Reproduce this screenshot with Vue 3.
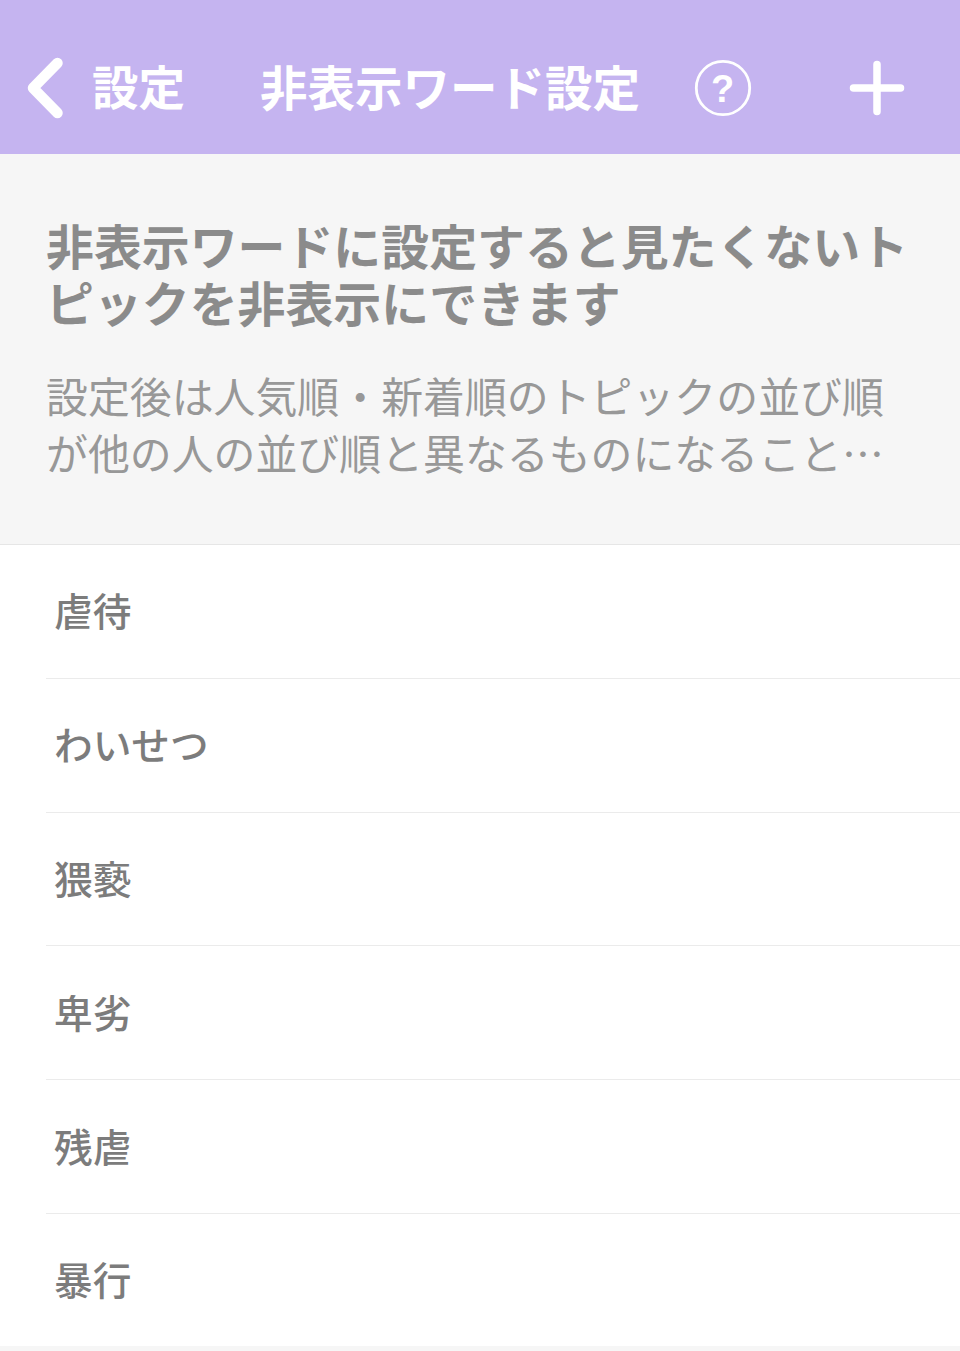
<script setup>
const words = ['虐待', 'わいせつ', '猥褻', '卑劣', '残虐', '暴行'];
</script>

<template>
    <div class="page">
        <header class="header">
            <div class="back">
                <svg class="chevron" width="44" height="68" viewBox="0 0 44 68">
                    <path d="M33.500 9 L9 34 L33.500 59" fill="none" stroke="#fff" stroke-width="10.500" stroke-linecap="round" stroke-linejoin="round" />
                </svg>
                <span class="back-label">設定</span>
            </div>
            <h1 class="title">非表示ワード設定</h1>
            <svg class="help" width="58" height="58" viewBox="0 0 58 58">
                <circle cx="29" cy="29" r="26.700" fill="none" stroke="#fff" stroke-width="2.800" />
                <text x="28.500" y="42.500" text-anchor="middle" fill="#fff" font-size="38" font-weight="700" font-family="Liberation Sans, sans-serif">?</text>
            </svg>
            <svg class="plus" width="56" height="56" viewBox="0 0 56 56">
                <path d="M28 4.500 V51.500 M4.500 28 H51.500" stroke="#fff" stroke-width="7.500" stroke-linecap="round" />
            </svg>
        </header>

        <section class="intro">
            <p class="lead">非表示ワードに設定すると見たくないトピックを非表示にできます</p>
            <p class="note">設定後は人気順・新着順のトピックの並び順が他の人の並び順と異なるものになること…</p>
        </section>

        <ul class="words">
            <li v-for="word in words" :key="word" class="word">
                <span>{{ word }}</span>
            </li>
        </ul>
    </div>
</template>

<style scoped>
.page {
    width: 960px;
    height: 1351px;
    overflow: hidden;
    background-color: #f6f6f6;
    font-family: "Noto Sans CJK JP", "Liberation Sans", sans-serif;
}

.header {
    display: flex;
    align-items: center;
    height: 154px;
    background-color: #c5b4f0;
    color: #fff;
    box-sizing: border-box;
    padding-top: 21px;
    padding-left: 24px;
}

.back {
    display: flex;
    align-items: center;
    width: 236px;
}

.chevron {
    flex-shrink: 0;
}

.back-label {
    margin-left: 24px;
    margin-bottom: 4px;
    font-size: 46.500px;
    font-weight: 700;
    line-height: 1;
}

.title {
    margin: 0 0 4px;
    width: 380px;
    font-size: 47.500px;
    font-weight: 700;
    line-height: 1;
    white-space: nowrap;
}

.help {
    margin-left: 54px;
}

.plus {
    margin-left: 97px;
}

.intro {
    box-sizing: border-box;
    height: 391px;
    padding: 62px 46px 0;
    border-bottom: 1.500px solid #e6e6e6;
}

.lead {
    margin: 0;
    font-size: 47.900px;
    font-weight: 700;
    line-height: 57px;
    color: #8b8b8b;
}

.note {
    margin: 36px 0 0;
    font-size: 41.900px;
    line-height: 57px;
    color: #989898;
}

.words {
    margin: 0;
    padding: 0;
    list-style: none;
    background-color: #fff;
}

.word {
    display: flex;
    align-items: center;
    box-sizing: border-box;
    height: 133.800px;
    margin-left: 46px;
    padding-left: 8px;
    padding-bottom: 4px;
    border-bottom: 1.500px solid #ebebeb;
    font-size: 38.700px;
    font-weight: 500;
    color: #7c7c7c;
}

.word:last-child {
    height: 132px;
    margin-left: 0;
    padding-left: 54px;
    border-bottom: none;
}
</style>
